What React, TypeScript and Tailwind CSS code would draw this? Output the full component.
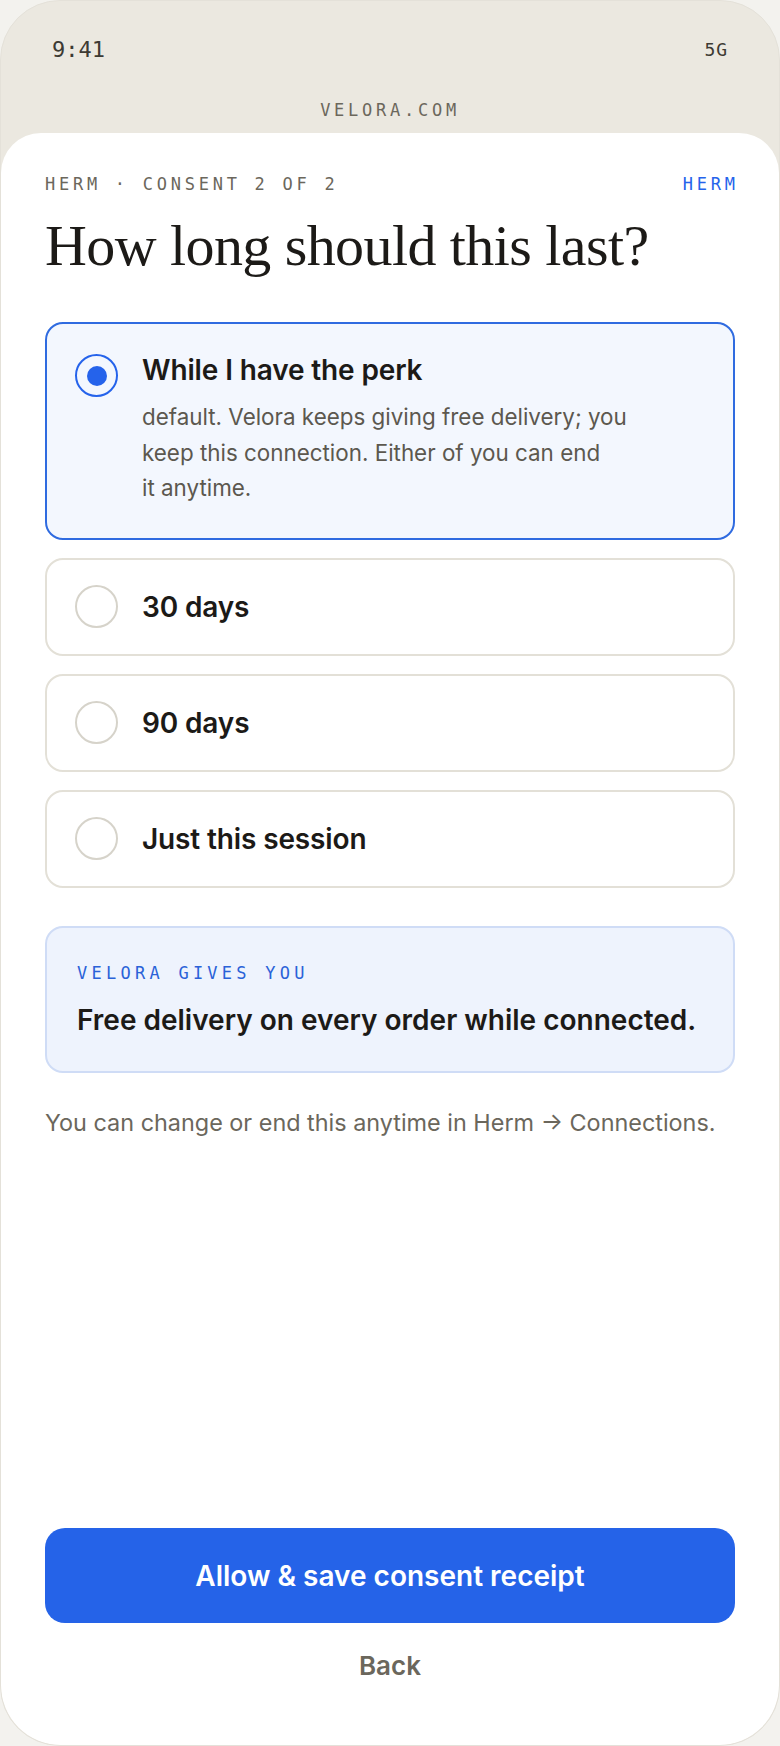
const mono = "font-['DejaVu_Sans_Mono','Liberation_Mono',monospace]";
const sans = "font-['Inter','Noto_Sans',sans-serif]";

type Option = { id: string; label: string; desc?: string[] };

const options: Option[] = [
  {
    id: "perk",
    label: "While I have the perk",
    desc: [
      "default. Velora keeps giving free delivery; you",
      "keep this connection. Either of you can end",
      "it anytime.",
    ],
  },
  { id: "30", label: "30 days" },
  { id: "90", label: "90 days" },
  { id: "session", label: "Just this session" },
];

function Radio({ checked }: { checked: boolean }) {
  if (checked) {
    return (
      <div className="w-[43px] h-[43px] shrink-0 rounded-full border-2 border-[#2563eb] flex items-center justify-center">
        <div className="w-[20px] h-[20px] rounded-full bg-[#2563eb]" />
      </div>
    );
  }
  return <div className="w-[43px] h-[43px] shrink-0 rounded-full border-2 border-[#d6d3ca] bg-white" />;
}

export default function App() {
  const selected = "perk";

  return (
    <div className="w-[780px] h-[1746px] bg-[#f3f2ee]">
      <div className="w-full h-full rounded-[60px] bg-[#ebe8e0] border border-[#e4e1d9] overflow-hidden flex flex-col">
        {/* status bar */}
        <div className={`${mono} flex justify-between items-center px-[51px] pt-[36px] text-[#3d3a33]`}>
          <span className="text-[22px] leading-[26px]">9:41</span>
          <span className="text-[18px] leading-[26px] tracking-[0.05em]">5G</span>
        </div>
        <div className={`${mono} text-center text-[17px] tracking-[0.22em] text-[#6b675c] mt-[37px] leading-[20px]`}>
          VELORA.COM
        </div>

        {/* sheet */}
        <div className="flex-1 mt-[13px] bg-white rounded-t-[40px] rounded-b-[60px] flex flex-col px-[44px] pt-[40px] pb-[61px]">
          <div className={`${mono} flex justify-between items-center text-[17px] tracking-[0.22em] leading-[22px]`}>
            <span className="text-[#6b675c]">HERM · CONSENT 2 OF 2</span>
            <span className="text-[#2563eb] -mr-[0.22em]">HERM</span>
          </div>

          <h1 className="font-['Liberation_Serif','Times_New_Roman',serif] text-[58px] leading-[64px] text-[#1c1a17] tracking-[-0.01em] mt-[19px]">
            How long should this last?
          </h1>

          <div className={`${sans} flex flex-col gap-[18px] mt-[44px]`}>
            {options.map((o) => {
              const on = o.id === selected;
              return (
                <div
                  key={o.id}
                  className={
                    on
                      ? "rounded-[18px] border-2 border-[#2f6be0] bg-[#f3f7fe] flex gap-[24px] pl-[28px] pr-[30px] pt-[28px] pb-[32px]"
                      : "rounded-[18px] border-2 border-[#e3e0d7] bg-white flex items-center gap-[24px] pl-[28px] pr-[30px] h-[98px]"
                  }
                >
                  <div className={on ? "pt-[2px]" : ""}>
                    <Radio checked={on} />
                  </div>
                  <div className="flex flex-col">
                    <div className="text-[28px] leading-[36px] font-semibold text-[#1c1a17] tracking-[-0.005em]">{o.label}</div>
                    {o.desc && (
                      <p className="text-[22.4px] leading-[35.5px] text-[#5c584f] mt-[11px]">
                        {o.desc.map((line, i) => (
                          <span key={i} className="block">
                            {line}
                          </span>
                        ))}
                      </p>
                    )}
                  </div>
                </div>
              );
            })}
          </div>

          <div className={`${sans} mt-[38px] rounded-[18px] border-2 border-[#cfdcf6] bg-[#eef3fd] px-[30px] pt-[35px] pb-[33px]`}>
            <div className={`${mono} text-[17px] tracking-[0.25em] leading-[20px] text-[#2a62d8]`}>VELORA GIVES YOU</div>
            <div className="text-[28px] leading-[36px] font-semibold text-[#1c1a17] mt-[19px]">
              Free delivery on every order while connected.
            </div>
          </div>

          <p className={`${sans} mt-[35px] text-[23.4px] leading-[30px] text-[#6b675c]`}>
            You can change or end this anytime in Herm → Connections.
          </p>

          <div className="flex-1" />

          <button className={`${sans} w-full h-[95px] rounded-[20px] bg-[#2563e8] text-white text-[28px] font-semibold`}>
            Allow &amp; save consent receipt
          </button>
          <button className={`${sans} mt-[25px] text-[26px] font-semibold text-[#6b675c] leading-[36px]`}>Back</button>
        </div>
      </div>
    </div>
  );
}
